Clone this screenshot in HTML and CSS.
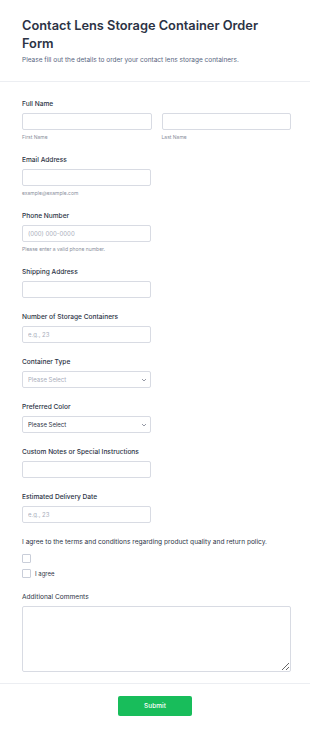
FILE: index.html
```html
<html>
  <head>
    <meta name="viewport" content="width=device-width, initial-scale=1">
    <meta charset="UTF-8">
    <link rel="stylesheet" href="styles.css">
  </head>
  <body>
    <form class="order-form">
      <div class="form-header">
        <h1>Contact Lens Storage Container Order Form</h1>
        <p class="subtitle">Please fill out the details to order your contact lens storage containers.</p>
      </div>

      <div class="form-body">
        <div class="field">
          <label class="field-label">Full Name</label>
          <div class="two-column">
            <div>
              <input type="text" class="text-input">
              <div class="sublabel">First Name</div>
            </div>
            <div>
              <input type="text" class="text-input">
              <div class="sublabel">Last Name</div>
            </div>
          </div>
        </div>

        <div class="field">
          <label class="field-label">Email Address</label>
          <input type="email" class="text-input half">
          <div class="sublabel">example@example.com</div>
        </div>

        <div class="field">
          <label class="field-label">Phone Number</label>
          <input type="tel" class="text-input half" placeholder="(000) 000-0000">
          <div class="sublabel">Please enter a valid phone number.</div>
        </div>

        <div class="field">
          <label class="field-label">Shipping Address</label>
          <input type="text" class="text-input half">
        </div>

        <div class="field">
          <label class="field-label">Number of Storage Containers</label>
          <input type="text" class="text-input half" placeholder="e.g., 23">
        </div>

        <div class="field">
          <label class="field-label">Container Type</label>
          <div class="select-wrap half">
            <select class="select-input empty">
              <option>Please Select</option>
            </select>
            <svg class="chevron" width="6" height="4" viewBox="0 0 6 4"><path d="M1 1l2 2 2-2" fill="none" stroke="#8a8f9c" stroke-width="0.9"/></svg>
          </div>
        </div>

        <div class="field">
          <label class="field-label">Preferred Color</label>
          <div class="select-wrap half">
            <select class="select-input">
              <option>Please Select</option>
            </select>
            <svg class="chevron" width="6" height="4" viewBox="0 0 6 4"><path d="M1 1l2 2 2-2" fill="none" stroke="#8a8f9c" stroke-width="0.9"/></svg>
          </div>
        </div>

        <div class="field">
          <label class="field-label">Custom Notes or Special Instructions</label>
          <input type="text" class="text-input half">
        </div>

        <div class="field">
          <label class="field-label">Estimated Delivery Date</label>
          <input type="text" class="text-input half" placeholder="e.g., 23">
        </div>

        <div class="field terms">
          <label class="field-label normal">I agree to the terms and conditions regarding product quality and return policy.</label>
          <div class="check-row"><input type="checkbox" class="check"></div>
          <div class="check-row"><input type="checkbox" class="check"><span>I agree</span></div>
        </div>

        <div class="field last">
          <label class="field-label normal">Additional Comments</label>
          <textarea class="text-area"></textarea>
        </div>
      </div>

      <div class="form-footer">
        <button type="button" class="submit-button">Submit</button>
      </div>
    </form>
  </body>
</html>
```

FILE: styles.css
```css
:root {
  --text: #2c3345;
  --muted: #57647e;
  --hint: #8a8f9c;
  --placeholder: #a9aebb;
  --border: #d8dbe3;
  --divider: #eceef2;
  --green: #18bd5b;
}
* {
  box-sizing: border-box;
}
body {
  margin: 0;
  background: #fff;
  font-family: Inter, "Noto Sans", sans-serif;
  color: var(--text);
}
.form-header {
  padding: 17px 19px 16px 22px;
  border-bottom: 1px solid var(--divider);
}
.form-header h1 {
  margin: 0;
  font-size: 12.8px;
  line-height: 18px;
  font-weight: 600;
  color: var(--text);
}
.subtitle {
  margin: 3px 0 0;
  font-size: 6.5px;
  line-height: 9px;
  color: var(--muted);
}
.form-body {
  padding: 17px 19px 0 22px;
}
.field {
  padding-bottom: 14px;
}
.field.terms {
  padding-bottom: 11px;
}
.field.last {
  padding-bottom: 11px;
}
.field-label {
  display: block;
  font-size: 6.6px;
  line-height: 10px;
  font-weight: 500;
  margin-bottom: 4px;
}
.field-label.normal {
  font-weight: 400;
}
.two-column {
  display: grid;
  grid-template-columns: 1fr 1fr;
  gap: 10px;
}
.text-input,
.select-input {
  display: block;
  width: 100%;
  height: 17px;
  padding: 0 5px;
  border: 1px solid var(--border);
  border-radius: 2px;
  background: #fff;
  font-family: inherit;
  font-size: 6px;
  color: var(--text);
  outline: none;
}
.text-input::placeholder {
  color: var(--placeholder);
}
.half {
  width: 129px;
}
.sublabel {
  margin-top: 3px;
  font-size: 5px;
  line-height: 8px;
  color: var(--hint);
}
.select-wrap {
  position: relative;
}
.select-input {
  appearance: none;
  -webkit-appearance: none;
}
.select-input.empty {
  color: var(--placeholder);
}
.chevron {
  position: absolute;
  right: 4px;
  top: 7px;
}
.check-row {
  display: flex;
  align-items: center;
  gap: 4px;
  height: 15px;
  font-size: 6px;
}
.check {
  appearance: none;
  -webkit-appearance: none;
  margin: 0;
  width: 9px;
  height: 9px;
  border: 1px solid #c9ced9;
  border-radius: 1px;
  background: #fff;
}
.text-area {
  display: block;
  width: 100%;
  height: 66px;
  border: 1px solid var(--border);
  border-radius: 2px;
  font-family: inherit;
  font-size: 6px;
  outline: none;
}
.form-footer {
  border-top: 1px solid var(--divider);
  padding: 12px 0 17px;
  display: flex;
  justify-content: center;
}
.submit-button {
  width: 74px;
  height: 20px;
  border: none;
  border-radius: 2px;
  background: var(--green);
  color: #fff;
  font-family: inherit;
  font-size: 6.5px;
  font-weight: 500;
  cursor: pointer;
}
```
